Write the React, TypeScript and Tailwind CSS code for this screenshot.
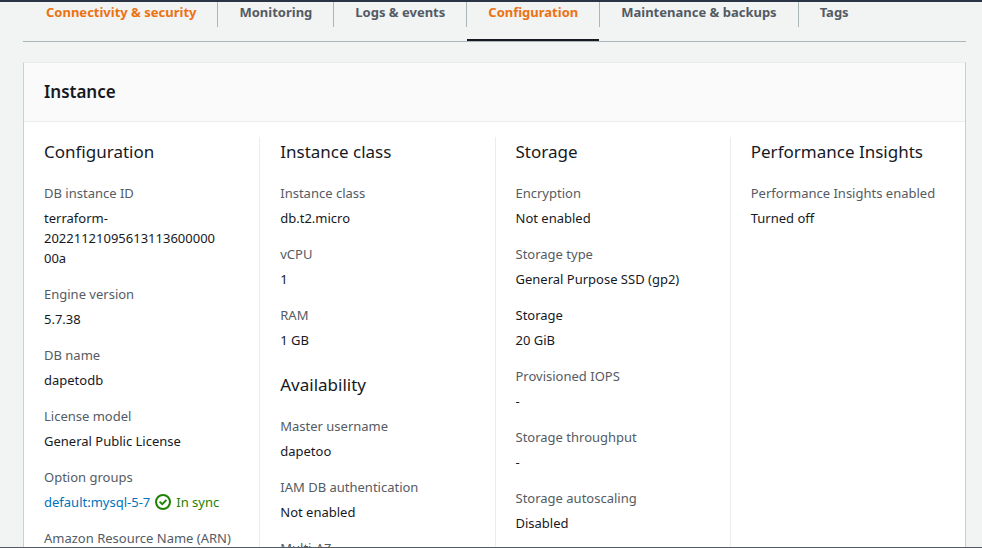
import React from "react";

type FieldData = { label: string; value: React.ReactNode; strong?: boolean };
type SectionData = { title: string; fields: FieldData[] };

function SyncStatus() {
  return (
    <span className="inline-flex items-center gap-[5px] text-[#1d8102]">
      <svg viewBox="0 0 16 16" className="h-4 w-4" fill="none" stroke="currentColor" strokeWidth="2" aria-hidden="true">
        <circle cx="8" cy="8" r="7" />
        <path d="M4.6 7.6L7.2 10.2L11.4 6" strokeWidth="1.8" />
      </svg>
      In sync
    </span>
  );
}

const columns: SectionData[][] = [
  [
    {
      title: "Configuration",
      fields: [
        {
          label: "DB instance ID",
          value: (
            <>
              terraform-
              <br />
              20221121095613113600000
              <br />
              00a
            </>
          ),
        },
        { label: "Engine version", value: "5.7.38" },
        { label: "DB name", value: "dapetodb" },
        { label: "License model", value: "General Public License" },
        {
          label: "Option groups",
          value: (
            <span className="flex items-center gap-[5px] whitespace-nowrap">
              <a href="#option-group" className="text-[#0073bb]">
                default:mysql-5-7
              </a>
              <SyncStatus />
            </span>
          ),
        },
        { label: "Amazon Resource Name (ARN)", value: "" },
      ],
    },
  ],
  [
    {
      title: "Instance class",
      fields: [
        { label: "Instance class", value: "db.t2.micro" },
        { label: "vCPU", value: "1" },
        { label: "RAM", value: "1 GB" },
      ],
    },
    {
      title: "Availability",
      fields: [
        { label: "Master username", value: "dapetoo" },
        { label: "IAM DB authentication", value: "Not enabled" },
        { label: "Multi-AZ", value: "" },
      ],
    },
  ],
  [
    {
      title: "Storage",
      fields: [
        { label: "Encryption", value: "Not enabled" },
        { label: "Storage type", value: "General Purpose SSD (gp2)" },
        { label: "Storage", value: "20 GiB", strong: true },
        { label: "Provisioned IOPS", value: "-" },
        { label: "Storage throughput", value: "-" },
        { label: "Storage autoscaling", value: "Disabled" },
      ],
    },
  ],
  [
    {
      title: "Performance Insights",
      fields: [{ label: "Performance Insights enabled", value: "Turned off" }],
    },
  ],
];

const tabs = [
  { name: "Connectivity & security", tone: "text-[#ec7211]" },
  { name: "Monitoring", tone: "text-[#545b64]" },
  { name: "Logs & events", tone: "text-[#545b64]" },
  { name: "Configuration", tone: "text-[#ec7211]", active: true },
  { name: "Maintenance & backups", tone: "text-[#545b64]" },
  { name: "Tags", tone: "text-[#545b64]" },
];

function Tabs() {
  return (
    <div role="tablist" className="flex border-b border-[#aab7b8] pl-0.5">
      {tabs.map((tab, i) => (
        <div key={tab.name} className="flex items-start">
          <button
            type="button"
            role="tab"
            aria-selected={!!tab.active}
            className={`h-[39px] border-b-2 px-[21px] pb-[18px] text-[13px] leading-5 font-bold whitespace-nowrap ${tab.tone} ${
              tab.active ? "border-[#16191f]" : "border-transparent"
            }`}
          >
            {tab.name}
          </button>
          {i < tabs.length - 1 && <span className="h-[25px] w-px bg-[#aab7b8]" />}
        </div>
      ))}
    </div>
  );
}

function Section({ title, fields }: SectionData) {
  return (
    <section className="flex flex-col gap-4">
      <h3 className="text-[17px] leading-[30px]">{title}</h3>
      <dl className="flex flex-col gap-4">
        {fields.map((f) => (
          <div key={f.label} className="flex flex-col gap-[5px]">
            <dt className={f.strong ? "" : "text-[#545b64]"}>{f.label}</dt>
            <dd>{f.value}</dd>
          </div>
        ))}
      </dl>
    </section>
  );
}

export default function App() {
  return (
    <div className="flex h-screen flex-col overflow-hidden border-t-2 border-b border-t-[#2b3445] border-b-[#545b64] bg-[#f2f3f3] font-['Noto_Sans',sans-serif] text-[13px] leading-5 text-[#16191f]">
      <div className="flex min-h-0 flex-1 flex-col gap-5 overflow-hidden pr-4 pl-[23px]">
        <Tabs />
        <main className="shrink-0 border border-[#c9cfcf] border-t-[#eaeded] bg-white">
          <header className="border-b border-[#eaeded] bg-[#fafafa] px-5 py-[14px]">
            <h2 className="text-[17px] leading-[30px] font-semibold">Instance</h2>
          </header>
          <div className="grid grid-cols-4 pt-[15px]">
            {columns.map((sections, i) => (
              <div
                key={i}
                className={`flex min-w-0 flex-col gap-5 pl-5 ${i > 0 ? "border-l border-[#eaeded]" : ""}`}
              >
                {sections.map((s) => (
                  <Section key={s.title} {...s} />
                ))}
              </div>
            ))}
          </div>
        </main>
      </div>
    </div>
  );
}
